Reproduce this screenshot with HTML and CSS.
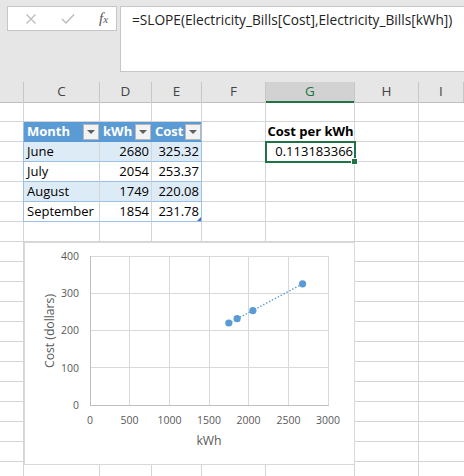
FILE: index.html
```html
<!DOCTYPE html>
<html lang="en">

<head>
    <meta charset="UTF-8">
    <title>Electricity Bills - Excel</title>
    <link rel="stylesheet" href="styles.css">
</head>

<body>
    <!-- formula bar -->
    <div class="formula-bar">
        <div class="fx-box">
            <svg class="fx-icon" width="12" height="12" viewBox="0 0 12 12">
                <path d="M1.5 1.5 L10.5 10.5 M10.5 1.5 L1.5 10.5" stroke="#bdbdbd" stroke-width="1.4" fill="none" />
            </svg>
            <svg class="fx-icon" width="14" height="12" viewBox="0 0 14 12">
                <path d="M1 6 L5 10 L13 1.5" stroke="#bdbdbd" stroke-width="1.5" fill="none" />
            </svg>
            <span class="fx-label"><i>f</i><i class="fx-x">x</i></span>
        </div>
        <div class="formula-input">=SLOPE(Electricity_Bills[Cost],Electricity_Bills[kWh])</div>
    </div>

    <!-- column headings -->
    <div class="col-heads">
        <div></div>
        <div>C</div>
        <div>D</div>
        <div>E</div>
        <div>F</div>
        <div class="active">G</div>
        <div>H</div>
        <div>I</div>
    </div>

    <div class="sheet">
        <div class="row"></div>

        <div class="row">
            <div class="cell tbl-edge"></div>
            <div class="cell th">Month <span class="filter"></span></div>
            <div class="cell th">kWh <span class="filter"></span></div>
            <div class="cell th th-last">Cost <span class="filter"></span></div>
            <div class="cell"></div>
            <div class="cell bold center">Cost per kWh</div>
        </div>

        <div class="row">
            <div class="cell tbl-edge"></div>
            <div class="cell td band">June</div>
            <div class="cell td band num">2680</div>
            <div class="cell td td-last band num">325.32</div>
            <div class="cell"></div>
            <div class="cell num sel">0.113183366</div>
        </div>

        <div class="row">
            <div class="cell tbl-edge"></div>
            <div class="cell td">July</div>
            <div class="cell td num">2054</div>
            <div class="cell td td-last num">253.37</div>
        </div>

        <div class="row">
            <div class="cell tbl-edge"></div>
            <div class="cell td band">August</div>
            <div class="cell td band num">1749</div>
            <div class="cell td td-last band num">220.08</div>
        </div>

        <div class="row">
            <div class="cell tbl-edge"></div>
            <div class="cell td">September</div>
            <div class="cell td num">1854</div>
            <div class="cell td td-last num resize">231.78</div>
        </div>

        <!-- chart floats over the grid -->
        <div class="chart">
            <svg width="331" height="223" viewBox="0 0 331 223">
                <rect x="0.5" y="0.5" width="330" height="222" fill="#fff" stroke="#d9d9d9" />

                <g stroke="#d9d9d9" stroke-width="1">
                    <line x1="66" y1="14.5" x2="304" y2="14.5" />
                    <line x1="66" y1="51.5" x2="304" y2="51.5" />
                    <line x1="66" y1="88.5" x2="304" y2="88.5" />
                    <line x1="66" y1="125.5" x2="304" y2="125.5" />
                    <line x1="105.5" y1="14" x2="105.5" y2="163" />
                    <line x1="145.5" y1="14" x2="145.5" y2="163" />
                    <line x1="185.5" y1="14" x2="185.5" y2="163" />
                    <line x1="224.5" y1="14" x2="224.5" y2="163" />
                    <line x1="264.5" y1="14" x2="264.5" y2="163" />
                    <line x1="304.5" y1="14" x2="304.5" y2="163" />
                </g>
                <g stroke="#bfbfbf" stroke-width="1">
                    <line x1="66.5" y1="14" x2="66.5" y2="164" />
                    <line x1="66" y1="163.5" x2="305" y2="163.5" />
                </g>

                <g class="tick" text-anchor="end">
                    <text x="55" y="18">400</text>
                    <text x="55" y="55">300</text>
                    <text x="55" y="92">200</text>
                    <text x="55" y="130">100</text>
                    <text x="55" y="167">0</text>
                </g>
                <g class="tick" text-anchor="middle">
                    <text x="66" y="182">0</text>
                    <text x="105.5" y="182">500</text>
                    <text x="145.5" y="182">1000</text>
                    <text x="185" y="182">1500</text>
                    <text x="224.5" y="182">2000</text>
                    <text x="264.5" y="182">2500</text>
                    <text x="304" y="182">3000</text>
                </g>
                <text class="axis-title" x="185" y="203" text-anchor="middle">kWh</text>
                <text class="axis-title" transform="translate(30 89) rotate(-90)" text-anchor="middle">Cost (dollars)</text>

                <!-- linear trendline -->
                <line x1="204.8" y1="81.2" x2="278.6" y2="41.9" stroke="#5b9bd5" stroke-width="1.6"
                    stroke-dasharray="0.1 3.2" stroke-linecap="round" />

                <g fill="#5b9bd5">
                    <circle cx="278.6" cy="41.8" r="3.6" />
                    <circle cx="228.9" cy="68.6" r="3.6" />
                    <circle cx="204.8" cy="81" r="3.6" />
                    <circle cx="213.1" cy="76.7" r="3.6" />
                </g>
            </svg>
        </div>
    </div>
</body>

</html>
```

FILE: styles.css
```css
body {
    margin: 0;
    width: 464px;
    height: 476px;
    overflow: hidden;
    background-color: #fff;
    font-family: "Open Sans", "Noto Sans", sans-serif;
    color: #000;
}

/* formula bar */
.formula-bar {
    height: 82px;
    box-sizing: border-box;
    padding: 6px 0 0 7px;
    display: flex;
    align-items: flex-start;
    gap: 3px;
    background-color: #e6e6e6;
}

.fx-box {
    width: 110px;
    height: 25px;
    box-sizing: border-box;
    border: 1px solid #c6c6c6;
    background-color: #fff;
    display: flex;
    align-items: center;
    padding-left: 17px;
}

.fx-icon {
    display: block;
}

.fx-icon + .fx-icon {
    margin-left: 24px;
}

.fx-label {
    margin-left: 24px;
    font-family: "Liberation Serif", serif;
    font-size: 15px;
    color: #555;
    line-height: 1;
}

.fx-x {
    font-size: 11px;
}

.formula-input {
    flex: 1;
    height: 66px;
    box-sizing: border-box;
    border: 1px solid #c6c6c6;
    border-right: none;
    background-color: #fff;
    padding: 3px 0 0 11px;
    font-size: 13.7px;
    color: #222;
    white-space: nowrap;
    overflow: hidden;
}

/* column headings */
.col-heads,
.row {
    display: grid;
    grid-template-columns: 24px 76px 52px 50px 64px 89px 64px 1fr;
}

.col-heads {
    height: 20px;
    background-color: #e6e6e6;
}

.col-heads div {
    box-sizing: border-box;
    border-right: 1px solid #c6c6c6;
    border-bottom: 1px solid #bfbfbf;
    text-align: center;
    font-size: 13.5px;
    line-height: 19px;
    color: #444;
}

.col-heads .active {
    background-color: #d2d2d2;
    border-bottom: 2px solid #217346;
    color: #217346;
}

/* grid */
.sheet {
    position: relative;
    height: 374px;
    background-image:
        repeating-linear-gradient(to bottom, transparent 0 19px, #d4d4d4 19px 20px),
        linear-gradient(to right,
            transparent 0 23px, #d4d4d4 23px 24px,
            transparent 24px 99px, #d4d4d4 99px 100px,
            transparent 100px 151px, #d4d4d4 151px 152px,
            transparent 152px 201px, #d4d4d4 201px 202px,
            transparent 202px 265px, #d4d4d4 265px 266px,
            transparent 266px 354px, #d4d4d4 354px 355px,
            transparent 355px 418px, #d4d4d4 418px 419px,
            transparent 419px);
}

.row {
    height: 20px;
}

.cell {
    box-sizing: border-box;
    height: 20px;
    padding: 0 2px 0 3px;
    font-size: 13px;
    line-height: 19px;
    white-space: nowrap;
}

.num {
    text-align: right;
}

.bold {
    font-weight: bold;
}

.center {
    text-align: center;
    padding: 0;
}

/* Electricity_Bills table */
.tbl-edge {
    border-right: 1px solid #9bc2e6;
}

.th {
    display: flex;
    align-items: center;
    justify-content: space-between;
    padding-right: 0;
    background-color: #5b9bd5;
    color: #fff;
    font-weight: bold;
    border-right: 1px solid #5b9bd5;
    border-bottom: 1px solid #5b9bd5;
}

.th-last {
    border-right-color: #9bc2e6;
}

.filter {
    width: 16px;
    height: 16px;
    box-sizing: border-box;
    border: 1px solid #b8b8b8;
    background-color: #f3f3f3;
    display: flex;
    align-items: center;
    justify-content: center;
}

.filter::after {
    content: '';
    border-left: 4px solid transparent;
    border-right: 4px solid transparent;
    border-top: 4px solid #5f5f5f;
}

.td {
    border-right: 1px solid #d4d4d4;
    border-bottom: 1px solid #9bc2e6;
}

.td-last {
    border-right-color: #9bc2e6;
}

.band {
    background-color: #ddebf7;
}

.resize {
    position: relative;
}

.resize::after {
    content: '';
    position: absolute;
    right: 0;
    bottom: 0;
    border-left: 4px solid transparent;
    border-bottom: 4px solid #4472c4;
}

/* active cell */
.sel {
    position: relative;
}

.sel::before {
    content: '';
    position: absolute;
    left: -1px;
    top: -1px;
    right: -1px;
    bottom: -1px;
    border: 2px solid #217346;
}

.sel::after {
    content: '';
    position: absolute;
    right: -3px;
    bottom: -3px;
    width: 5px;
    height: 5px;
    background-color: #217346;
    border: 1px solid #fff;
}

/* chart */
.chart {
    position: absolute;
    left: 24px;
    top: 140px;
}

.chart svg {
    display: block;
}

.tick {
    font-size: 10.5px;
    fill: #595959;
}

.axis-title {
    font-size: 12.2px;
    fill: #595959;
}
```
